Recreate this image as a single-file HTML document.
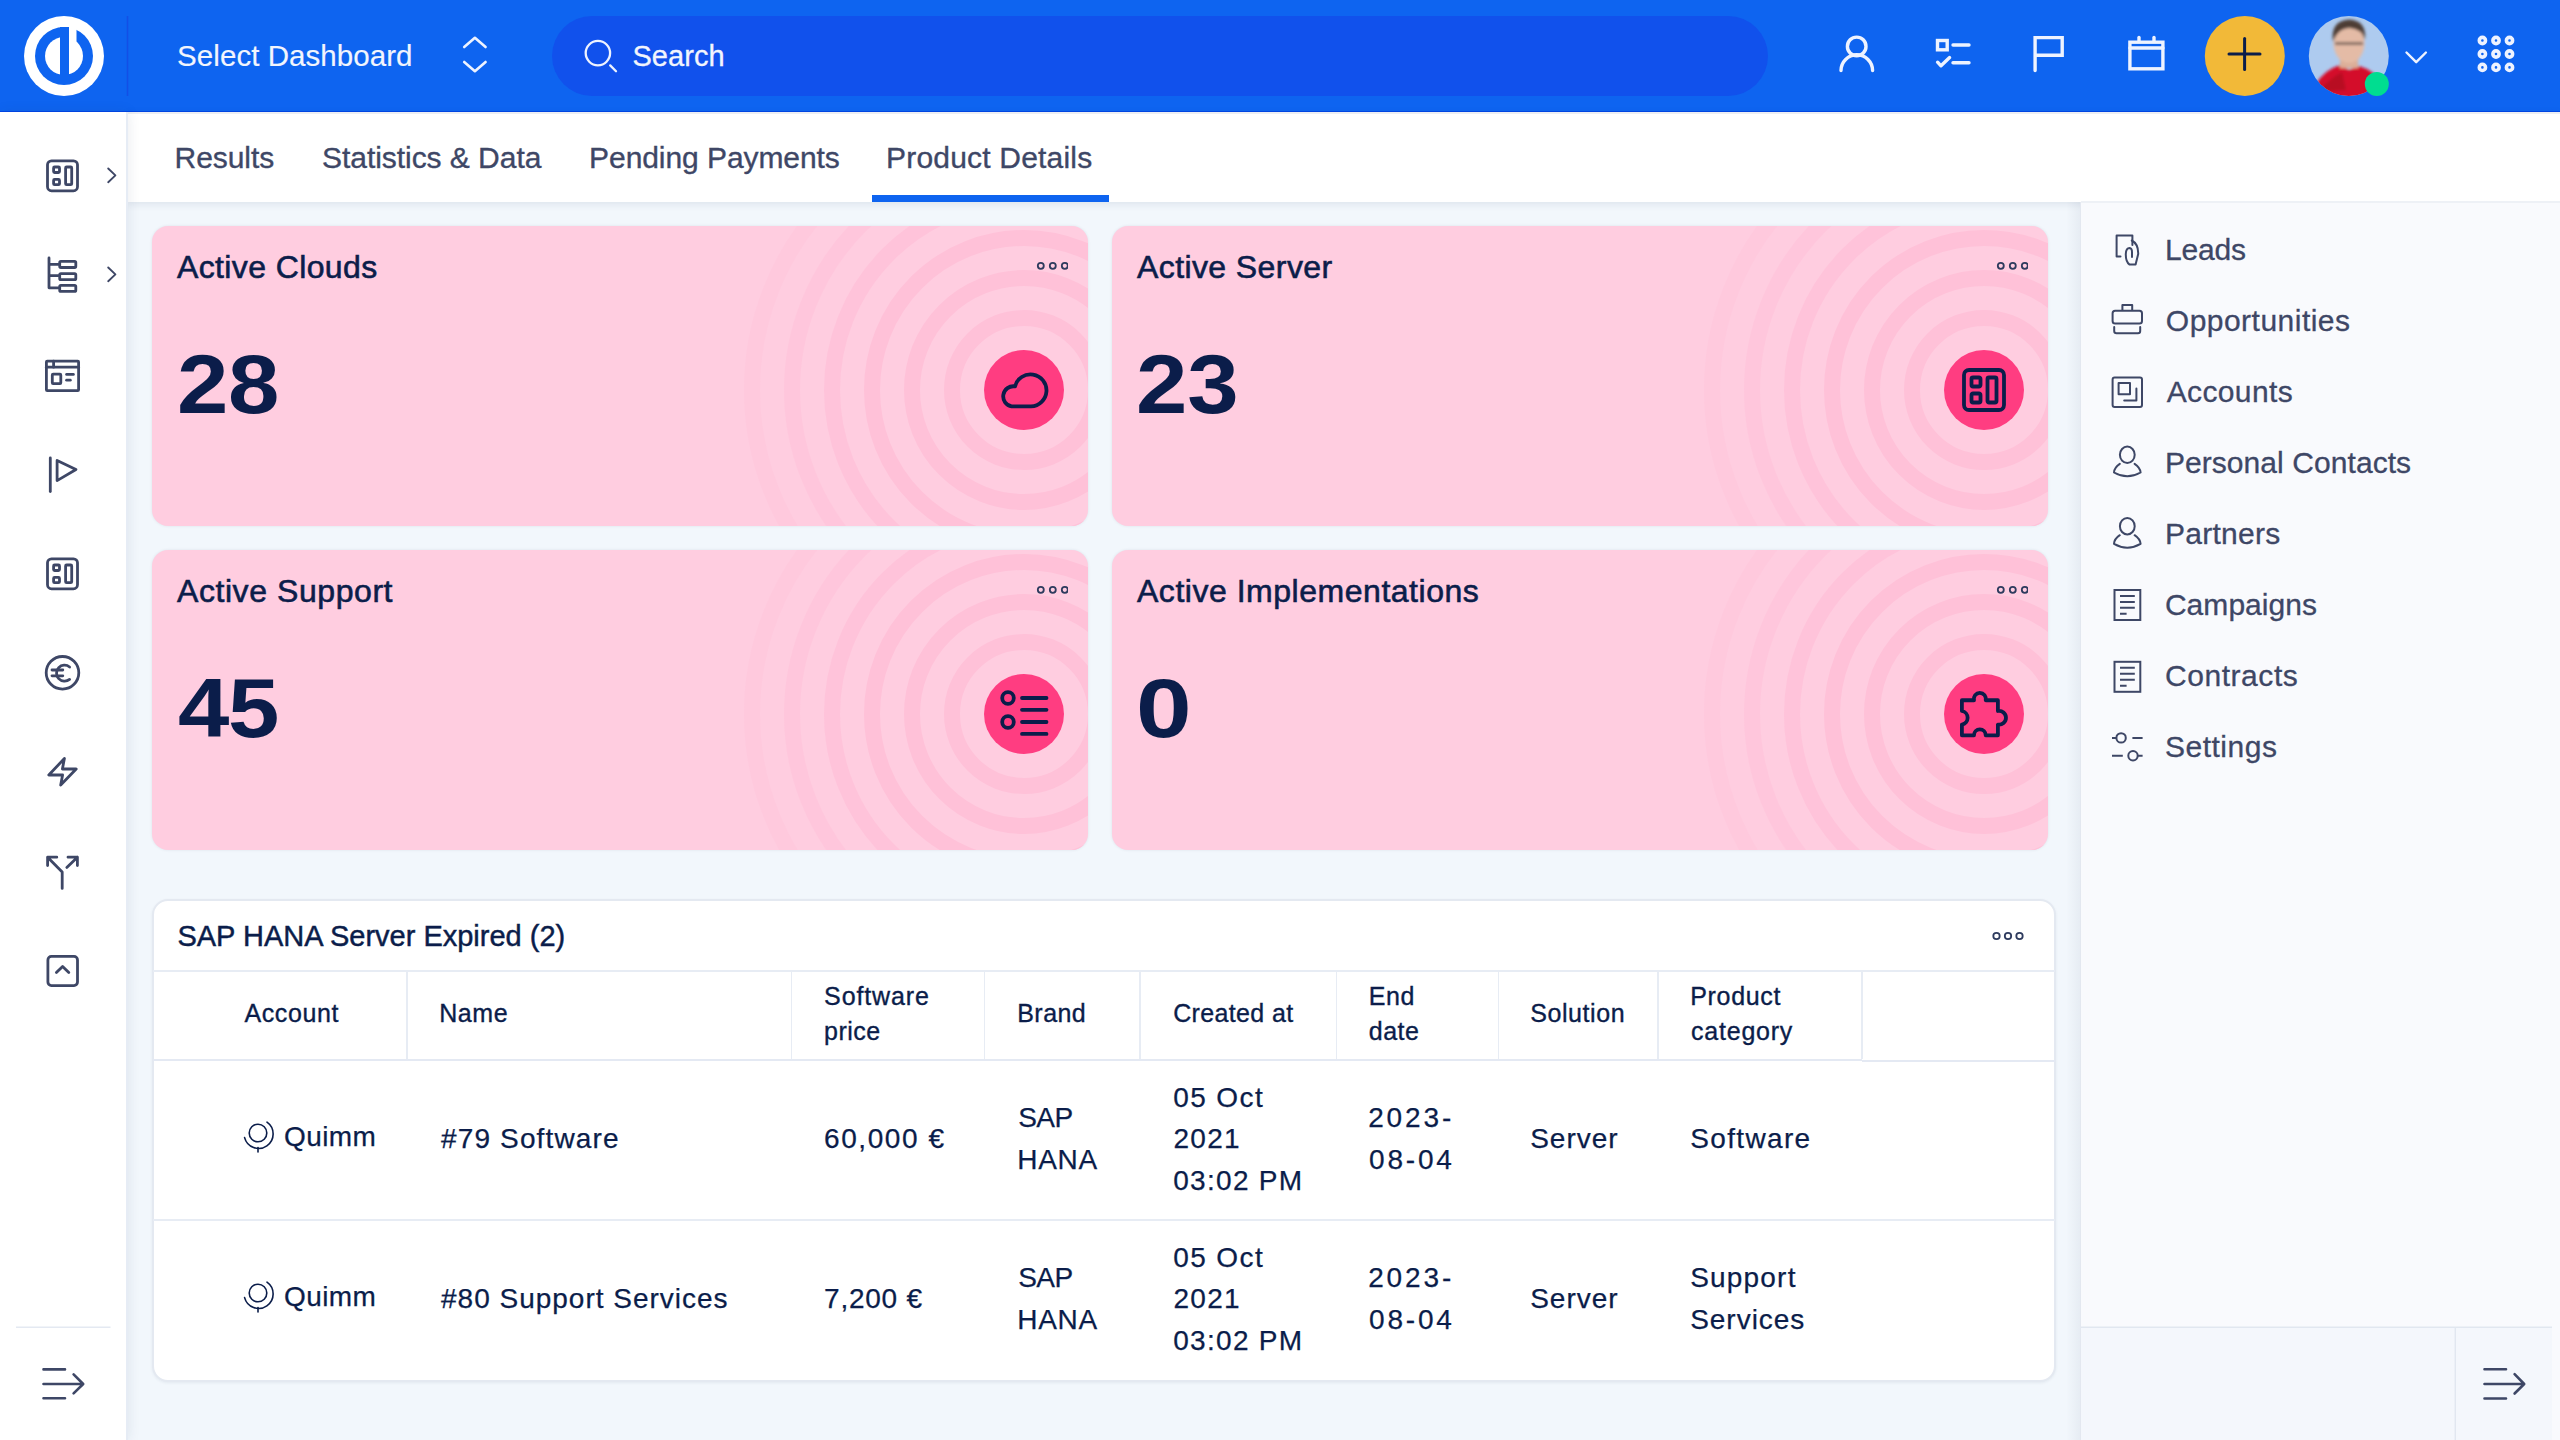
<!DOCTYPE html>
<html><head><meta charset="utf-8">
<style>
*{box-sizing:border-box;margin:0;padding:0}
html,body{width:2560px;height:1440px;overflow:hidden}
body{position:relative;background:#f2f7fc;font-family:"Liberation Sans",sans-serif;color:#0b1d4a}
.abs{position:absolute}
.t{position:absolute;white-space:nowrap;line-height:1}
#hdr{left:0;top:0;width:2560px;height:112px;background:#0e64f0}
#side{left:0;top:112px;width:127px;height:1328px;background:#fff;box-shadow:1px 0 12px rgba(30,50,90,.10);z-index:5}
#tabs{left:127px;top:112px;width:2433px;height:90px;background:#fff;box-shadow:0 2px 8px rgba(30,50,90,.10)}
#rp{left:2081px;top:202px;width:479px;height:1238px;background:#f9fafd}
#rpsh{left:2066px;top:202px;width:15px;height:1238px;background:linear-gradient(to right,rgba(30,50,90,0),rgba(30,50,90,.06))}
#rpf{left:2081px;top:1328px;width:471px;height:112px;background:#f4f7fc}
.card{position:absolute;width:936px;height:300px;border-radius:16px;background:#ffcde0;overflow:hidden;box-shadow:0 0 3px rgba(40,50,80,.10)}
</style></head><body>
<div id="hdr" class="abs">
  <svg class="abs" style="left:0;top:0" width="140" height="112" viewBox="0 0 140 112">
    <circle cx="64" cy="56" r="40" fill="#fff"/>
    <circle cx="64" cy="56" r="29" fill="#0e64f0"/>
    <circle cx="64" cy="56" r="19" fill="#fff"/>
    <path d="M68.9,25 H76.5 V42 L68.9,48 Z" fill="#fff"/>
    <rect x="60" y="27" width="9" height="48" fill="#0e64f0"/>
    <line x1="127.5" y1="16" x2="127.5" y2="96" stroke="#134fe6" stroke-width="1.5"/>
  </svg>
  <svg class="abs" style="left:455px;top:30px" width="40" height="50" viewBox="0 0 40 50">
    <g fill="none" stroke="#eef3ff" stroke-width="2.6" stroke-linecap="round" stroke-linejoin="round">
    <polyline points="9.2,17 19.9,7.8 30.6,17"/>
    <polyline points="9.2,32 19.9,41.2 30.6,32"/></g>
  </svg>
  <div class="abs" style="left:552px;top:16px;width:1216px;height:80px;border-radius:40px;background:#1151ec"></div>
  <svg class="abs" style="left:570px;top:26px" width="60" height="60" viewBox="570 26 60 60">
    <g fill="none" stroke="#eef3ff" stroke-width="2.3" stroke-linecap="round"><circle cx="597.9" cy="53.1" r="12.2"/><line x1="610.2" y1="65.4" x2="616" y2="71.2"/></g>
  </svg>
</div>
<div class="abs" style="left:0;top:110.6px;width:2560px;height:1.4px;background:#0046e6"></div>
<div id="t52" class="t" style="left:177.10px;top:41.03px;font-size:29.5px;color:#f2f5fd;-webkit-text-stroke:0.15px #f2f5fd;letter-spacing:0.060px">Select Dashboard</div><div id="t53" class="t" style="left:632.46px;top:41.95px;font-size:29px;color:#f2f5fd;-webkit-text-stroke:0.3px #f2f5fd;letter-spacing:0.072px">Search</div>
<svg class="abs" style="left:1800px;top:0" width="760" height="112" viewBox="1800 0 760 112">
<g fill="none" stroke="#eef3ff" stroke-width="3.4" stroke-linecap="round" stroke-linejoin="round">
<circle cx="1856.7" cy="46.4" r="9.3"/><path d="M1841,70.6 A15.8,15.8 0 0 1 1872.6,70.6"/>
<rect x="1937.5" y="40.5" width="9.7" height="9.3" stroke-linejoin="miter" stroke-linecap="butt"/><line x1="1953" y1="45" x2="1969" y2="45"/><line x1="1953" y1="62.8" x2="1969" y2="62.8"/><polyline points="1937.6,62.2 1941,65.8 1949.6,57.6"/>
<path d="M2035.1,70.5 V37.6 H2062.2 V55.3 H2035.1" stroke-linejoin="miter"/>
<rect x="2129.9" y="42.2" width="33" height="26.6" stroke-linejoin="miter"/><line x1="2129.9" y1="48" x2="2162.9" y2="48"/><line x1="2139" y1="37.5" x2="2139" y2="41"/><line x1="2154" y1="37.5" x2="2154" y2="41"/>
<polyline points="2406.5,52.5 2416.2,62.2 2425.9,52.5" stroke-width="2.4"/>
</g>
<circle cx="2244.8" cy="55.9" r="40" fill="#f2b938"/>
<g stroke="#0b1d4a" stroke-width="3" stroke-linecap="round"><line x1="2229" y1="54" x2="2260" y2="54"/><line x1="2244.6" y1="38.6" x2="2244.6" y2="69.6"/></g>
<defs><clipPath id="avc"><circle cx="2348.8" cy="56" r="40"/></clipPath><filter id="bl" x="-20%" y="-20%" width="140%" height="140%"><feGaussianBlur stdDeviation="1.6"/></filter></defs>
<g clip-path="url(#avc)"><rect x="2300" y="10" width="100" height="100" fill="#aecbef"/>
<g filter="url(#bl)">
<path d="M2308,100 L2316,84 Q2324,70 2340,65 L2349,70 L2359,66 Q2373,70 2382,82 L2396,100 Z" fill="#d40f2b"/>
<path d="M2318,92 Q2330,78 2342,72 L2346,90 Z" fill="#a00a1e" opacity=".55"/>
<rect x="2340" y="52" width="18" height="16" fill="#dcae98"/>
<ellipse cx="2349" cy="43" rx="15.5" ry="20" fill="#e4bba6"/>
<path d="M2333,42 Q2330,21 2349,19.5 Q2367,20.5 2365,40 Q2362,29 2350,28 Q2338,28 2333,42 Z" fill="#4e3c34"/>
<path d="M2335,43.5 H2363" stroke="#5a4844" stroke-width="2.2" fill="none"/>
</g></g>
<circle cx="2376.8" cy="83.9" r="12" fill="#00dd90"/>
<g fill="none" stroke="#eef3ff" stroke-width="3.6">
<circle cx="2482.4" cy="40.5" r="3.1"/><circle cx="2496" cy="40.5" r="3.1"/><circle cx="2509.5" cy="40.5" r="3.1"/>
<circle cx="2482.4" cy="54" r="3.1"/><circle cx="2496" cy="54" r="3.1"/><circle cx="2509.5" cy="54" r="3.1"/>
<circle cx="2482.4" cy="67.4" r="3.1"/><circle cx="2496" cy="67.4" r="3.1"/><circle cx="2509.5" cy="67.4" r="3.1"/>
</g>
</svg>
<div id="side" class="abs"></div><div class="abs" style="left:126.2px;top:112px;width:1.4px;height:1328px;background:#e6ecf5;z-index:6"></div>
<svg class="abs" style="left:0;top:112px;z-index:6" width="127" height="1328" viewBox="0 112 127 1328">
<g fill="none" stroke="#3e4766" stroke-width="2.8" stroke-linecap="round" stroke-linejoin="round">
<rect x="47.5" y="160.8" width="30" height="30" rx="4"/>
<rect x="53.6" y="167" width="5.9" height="5.5" rx="1"/><rect x="53.6" y="179.4" width="5.9" height="5.3" rx="1"/><rect x="65.6" y="167" width="6.1" height="17.7" rx="1"/>
<polyline points="108.2,168.5 115.4,175.4 108.2,182.2" stroke-width="1.9"/>
<path d="M49,258 V287.8 H58.3 M49,264.4 H58.3 M49,275.6 H58.3" />
<rect x="59.7" y="261.4" width="16.1" height="6.1" rx="1.2"/><rect x="59.7" y="273.6" width="16.1" height="6" rx="1.2"/><rect x="59.7" y="285.3" width="16.1" height="6.1" rx="1.2"/>
<polyline points="108.2,267.5 115.4,274.4 108.2,281.2" stroke-width="1.9"/>
<rect x="46.4" y="361.2" width="32.2" height="29.4" rx="0.8"/><line x1="46.4" y1="367.2" x2="78.6" y2="367.2"/><line x1="53.6" y1="361.2" x2="53.6" y2="367.2"/>
<rect x="52.3" y="374.2" width="8.5" height="9.4" rx="0.8"/><line x1="66.6" y1="374.4" x2="73.4" y2="374.4"/><line x1="66.6" y1="380.2" x2="70.3" y2="380.2"/>
<line x1="50.3" y1="458" x2="50.3" y2="491.5"/><path d="M57.1,460.5 L76,469.5 L57.1,480.6 Z"/>
<rect x="47.5" y="558.8" width="30" height="30" rx="4"/>
<rect x="53.6" y="565" width="5.9" height="5.5" rx="1"/><rect x="53.6" y="577.4" width="5.9" height="5.3" rx="1"/><rect x="65.6" y="565" width="6.1" height="17.7" rx="1"/>
<circle cx="62.5" cy="672.8" r="16.3"/><path d="M69.6,667 A8,8 0 1 0 69.6,679.4"/><line x1="52" y1="670" x2="62.8" y2="670"/><line x1="52" y1="675.8" x2="62.8" y2="675.8"/>
<path d="M64.4,758.5 L48.8,775 H62.6 L60.7,785 L76.2,769 H62.4 Z"/>
<path d="M62.2,888.4 V872 L47.6,857.2 M47.6,857.2 H56.8 M47.6,857.2 V865.6 M66.8,867.4 L77.4,857.2 M68,857.2 H77.4 V865.6"/>
<rect x="47.9" y="956.4" width="29.6" height="29.2" rx="3.5"/><polyline points="56.4,972.6 62.6,966.4 68.8,972.6"/>
<path d="M43.5,1369.4 H65 M43.5,1384 H83 M43.5,1398.3 H65 M73.6,1374.4 L83.2,1384 L73.6,1393.4" stroke-width="2.6"/>
</g>
<line x1="16" y1="1327.3" x2="110.5" y2="1327.3" stroke="#e4e9f2" stroke-width="1.6"/>
</svg>
<div id="tabs" class="abs"></div><div class="abs" style="left:127px;top:112px;width:2433px;height:1.5px;background:#eceef3"></div>
<div id="t54" class="t" style="left:174.56px;top:143.20px;font-size:30px;color:#3e4766;-webkit-text-stroke:0.35px #3e4766;letter-spacing:-0.060px">Results</div><div id="t55" class="t" style="left:322.00px;top:143.20px;font-size:30px;color:#3e4766;-webkit-text-stroke:0.35px #3e4766;letter-spacing:-0.045px">Statistics &amp; Data</div><div id="t56" class="t" style="left:589.10px;top:143.20px;font-size:30px;color:#3e4766;-webkit-text-stroke:0.35px #3e4766;letter-spacing:-0.072px">Pending Payments</div><div id="t57" class="t" style="left:886.10px;top:143.20px;font-size:30px;color:#3e4766;-webkit-text-stroke:0.35px #3e4766;letter-spacing:0.193px">Product Details</div>
<div class="abs" style="left:872px;top:195px;width:237px;height:7px;background:#0e64f0"></div>
<div id="rpsh" class="abs"></div><div id="rp" class="abs"></div><div class="abs" style="left:2079.8px;top:202px;width:1.4px;height:1238px;background:#e3e8f0"></div><div class="abs" style="left:2081px;top:201px;width:479px;height:1.5px;background:#eef1f6"></div>
<div id="rpf" class="abs"></div>
<svg class="abs" style="left:2081px;top:202px" width="479" height="1238" viewBox="2081 202 479 1238">
<g fill="none" stroke="#3e4766" stroke-width="2" stroke-linecap="round" stroke-linejoin="round">
<path d="M2120.5,256.5 H2116.6 V235.4 H2132.4 V245"/><path d="M2131.8,240.5 Q2138.5,244 2138.2,254 L2135.6,264.6 H2129.6 Q2125.6,262 2125.8,254 Q2126,248 2129.6,248 Q2132.2,248.2 2132,253 V257"/>
<path d="M2122.4,310 V305 H2132.2 V310"/><rect x="2112.6" y="310.8" width="29.4" height="12.6" rx="2.5"/><path d="M2114.2,327 V331 Q2114.2,333.2 2116.5,333.2 H2138 Q2140.2,333.2 2140.2,331 V327"/>
<rect x="2112.6" y="377.5" width="29.4" height="29.4" rx="2"/><rect x="2118.6" y="383" width="11.4" height="11.2"/><path d="M2136.4,388.5 V400.6 H2124.2"/>
<ellipse cx="2127.3" cy="454.8" rx="7.4" ry="8.2"/><path d="M2119.8,463.8 Q2114.2,467.6 2114,472.5 Q2127.3,480 2140.6,472.5 Q2140.2,467.6 2134.6,463.8"/>
<ellipse cx="2127.3" cy="526.2" rx="7.4" ry="8.2"/><path d="M2119.8,535.2 Q2114.2,539 2114,543.9 Q2127.3,551.4 2140.6,543.9 Q2140.2,539 2134.6,535.2"/>
<rect x="2114.5" y="590" width="25.8" height="30" stroke-linejoin="miter"/><path d="M2120,596 H2134.8 M2120,602 H2134.8 M2120,607.8 H2134.8 M2120,613.7 H2126.6" stroke-linecap="butt"/>
<rect x="2114.5" y="661.8" width="25.8" height="30" stroke-linejoin="miter"/><path d="M2120,667.8 H2134.8 M2120,673.7 H2134.8 M2120,679.7 H2134.8 M2120,685.7 H2126.6" stroke-linecap="butt"/>
<circle cx="2121.1" cy="737.9" r="4.7"/><path d="M2112,737.9 H2116.4 M2132.4,737.9 H2142.6 M2112,755.7 H2122.8 M2137.8,755.7 H2142.6" stroke-linecap="butt"/><circle cx="2133" cy="755.7" r="4.7"/>
</g>
<line x1="2081" y1="1327.3" x2="2552" y2="1327.3" stroke="#e1e7f0" stroke-width="1.6"/>
<line x1="2455.3" y1="1328" x2="2455.3" y2="1440" stroke="#e1e7f0" stroke-width="1.4"/>
<path d="M2484.5,1369.2 H2506 M2484.5,1384 H2524 M2484.5,1398.5 H2506 M2514.6,1374.2 L2524.2,1384 L2514.6,1393.5" fill="none" stroke="#3e4766" stroke-width="2.6" stroke-linecap="round" stroke-linejoin="round"/>
</svg>
<div id="t8" class="t" style="left:2164.92px;top:234.80px;font-size:30px;color:#3e4766;-webkit-text-stroke:0.3px #3e4766;letter-spacing:-0.180px">Leads</div>
<div id="t9" class="t" style="left:2165.82px;top:305.61px;font-size:30px;color:#3e4766;-webkit-text-stroke:0.3px #3e4766;letter-spacing:0.480px">Opportunities</div>
<div id="t10" class="t" style="left:2166.72px;top:376.61px;font-size:30px;color:#3e4766;-webkit-text-stroke:0.3px #3e4766;letter-spacing:0.360px">Accounts</div>
<div id="t11" class="t" style="left:2164.92px;top:447.61px;font-size:30px;color:#3e4766;-webkit-text-stroke:0.3px #3e4766;letter-spacing:0.068px">Personal Contacts</div>
<div id="t12" class="t" style="left:2164.92px;top:519.21px;font-size:30px;color:#3e4766;-webkit-text-stroke:0.3px #3e4766;letter-spacing:0.283px">Partners</div>
<div id="t13" class="t" style="left:2164.92px;top:589.50px;font-size:30px;color:#3e4766;-webkit-text-stroke:0.3px #3e4766;letter-spacing:0.045px">Campaigns</div>
<div id="t14" class="t" style="left:2164.92px;top:661.21px;font-size:30px;color:#3e4766;-webkit-text-stroke:0.3px #3e4766;letter-spacing:0.562px">Contracts</div>
<div id="t15" class="t" style="left:2164.92px;top:731.90px;font-size:30px;color:#3e4766;-webkit-text-stroke:0.3px #3e4766;letter-spacing:0.515px">Settings</div>

<div class="card" style="left:152px;top:226px"><svg class="abs" style="left:0;top:0" width="936" height="300" viewBox="0 0 936 300"><g fill="none" stroke="#ffc1d8" stroke-width="16"><circle cx="872" cy="164" r="72" stroke-opacity="1.0"/><circle cx="872" cy="164" r="112" stroke-opacity="1.0"/><circle cx="872" cy="164" r="152" stroke-opacity="1.0"/><circle cx="872" cy="164" r="192" stroke-opacity="0.8"/><circle cx="872" cy="164" r="232" stroke-opacity="0.55"/><circle cx="872" cy="164" r="272" stroke-opacity="0.3"/></g></svg>
<svg class="abs" style="left:832px;top:124px" width="80" height="80" viewBox="-40 -40 80 80"><circle r="40" fill="#ff3d81"/><g fill="none" stroke="#0b1d4a" stroke-width="3.8" stroke-linecap="round" stroke-linejoin="round"><path d="M-12.3,16.4 A10,10 0 0 1 -9,-3.6 A16,16 0 1 1 7,16.4 Z"/></g></svg>
<svg class="abs" style="left:880px;top:32px" width="36" height="16" viewBox="0 0 36 16"><g fill="none" stroke="#2e3b5e" stroke-width="1.8"><circle cx="8.8" cy="7.8" r="3"/><circle cx="20.8" cy="7.8" r="3"/><circle cx="32.8" cy="7.8" r="3"/></g></svg>
</div>
<div id="t0" class="t" style="left:177.00px;top:251.41px;font-size:32px;color:#0b1d4a;-webkit-text-stroke:0.6px #0b1d4a;letter-spacing:0.375px">Active Clouds</div>
<div id="t1" class="t" style="left:176.82px;top:342.00px;font-size:84px;color:#0b1d4a;font-weight:700;letter-spacing:-0.360px;transform:scaleX(1.1);transform-origin:0 0">28</div><div class="card" style="left:1112px;top:226px"><svg class="abs" style="left:0;top:0" width="936" height="300" viewBox="0 0 936 300"><g fill="none" stroke="#ffc1d8" stroke-width="16"><circle cx="872" cy="164" r="72" stroke-opacity="1.0"/><circle cx="872" cy="164" r="112" stroke-opacity="1.0"/><circle cx="872" cy="164" r="152" stroke-opacity="1.0"/><circle cx="872" cy="164" r="192" stroke-opacity="0.8"/><circle cx="872" cy="164" r="232" stroke-opacity="0.55"/><circle cx="872" cy="164" r="272" stroke-opacity="0.3"/></g></svg>
<svg class="abs" style="left:832px;top:124px" width="80" height="80" viewBox="-40 -40 80 80"><circle r="40" fill="#ff3d81"/><g fill="none" stroke="#0b1d4a" stroke-width="3.8" stroke-linecap="round" stroke-linejoin="round"><rect x="-20" y="-20" width="40" height="40" rx="5"/><rect x="-12.5" y="-12.5" width="9" height="9" rx="1.5"/><rect x="-12.5" y="3.5" width="9" height="9" rx="1.5"/><rect x="3.5" y="-12.5" width="9" height="25" rx="1.5"/></g></svg>
<svg class="abs" style="left:880px;top:32px" width="36" height="16" viewBox="0 0 36 16"><g fill="none" stroke="#2e3b5e" stroke-width="1.8"><circle cx="8.8" cy="7.8" r="3"/><circle cx="20.8" cy="7.8" r="3"/><circle cx="32.8" cy="7.8" r="3"/></g></svg>
</div>
<div id="t2" class="t" style="left:1137.00px;top:251.41px;font-size:32px;color:#0b1d4a;-webkit-text-stroke:0.6px #0b1d4a;letter-spacing:0.406px">Active Server</div>
<div id="t3" class="t" style="left:1136.46px;top:342.00px;font-size:84px;color:#0b1d4a;font-weight:700;letter-spacing:-0.180px;transform:scaleX(1.1);transform-origin:0 0">23</div><div class="card" style="left:152px;top:550px"><svg class="abs" style="left:0;top:0" width="936" height="300" viewBox="0 0 936 300"><g fill="none" stroke="#ffc1d8" stroke-width="16"><circle cx="872" cy="164" r="72" stroke-opacity="1.0"/><circle cx="872" cy="164" r="112" stroke-opacity="1.0"/><circle cx="872" cy="164" r="152" stroke-opacity="1.0"/><circle cx="872" cy="164" r="192" stroke-opacity="0.8"/><circle cx="872" cy="164" r="232" stroke-opacity="0.55"/><circle cx="872" cy="164" r="272" stroke-opacity="0.3"/></g></svg>
<svg class="abs" style="left:832px;top:124px" width="80" height="80" viewBox="-40 -40 80 80"><circle r="40" fill="#ff3d81"/><g fill="none" stroke="#0b1d4a" stroke-width="3.8" stroke-linecap="round" stroke-linejoin="round"><circle cx="-16" cy="-16" r="5.8"/><circle cx="-16" cy="8" r="5.8"/><line x1="-2" y1="-16" x2="22.5" y2="-16"/><line x1="-2" y1="-4.2" x2="22.5" y2="-4.2"/><line x1="-2" y1="8" x2="22.5" y2="8"/><line x1="-2" y1="19.9" x2="22.5" y2="19.9"/></g></svg>
<svg class="abs" style="left:880px;top:32px" width="36" height="16" viewBox="0 0 36 16"><g fill="none" stroke="#2e3b5e" stroke-width="1.8"><circle cx="8.8" cy="7.8" r="3"/><circle cx="20.8" cy="7.8" r="3"/><circle cx="32.8" cy="7.8" r="3"/></g></svg>
</div>
<div id="t4" class="t" style="left:177.00px;top:575.41px;font-size:32px;color:#0b1d4a;-webkit-text-stroke:0.6px #0b1d4a;letter-spacing:0.568px">Active Support</div>
<div id="t5" class="t" style="left:178.26px;top:666.00px;font-size:84px;color:#0b1d4a;font-weight:700;letter-spacing:-1.260px;transform:scaleX(1.1);transform-origin:0 0">45</div><div class="card" style="left:1112px;top:550px"><svg class="abs" style="left:0;top:0" width="936" height="300" viewBox="0 0 936 300"><g fill="none" stroke="#ffc1d8" stroke-width="16"><circle cx="872" cy="164" r="72" stroke-opacity="1.0"/><circle cx="872" cy="164" r="112" stroke-opacity="1.0"/><circle cx="872" cy="164" r="152" stroke-opacity="1.0"/><circle cx="872" cy="164" r="192" stroke-opacity="0.8"/><circle cx="872" cy="164" r="232" stroke-opacity="0.55"/><circle cx="872" cy="164" r="272" stroke-opacity="0.3"/></g></svg>
<svg class="abs" style="left:832px;top:124px" width="80" height="80" viewBox="-40 -40 80 80"><circle r="40" fill="#ff3d81"/><g fill="none" stroke="#0b1d4a" stroke-width="3.8" stroke-linecap="round" stroke-linejoin="round"><path d="M-22.1,-13.75 H-10 A6,6 0 1 1 1.7,-13.75 H13.9 V-3 A6.9,6.9 0 1 1 13.9,10.6 V21.3 H1.7 A5.85,5.85 0 0 0 -10,21.3 H-22.1 V10.6 A6.9,6.9 0 0 0 -22.1,-3 Z"/></g></svg>
<svg class="abs" style="left:880px;top:32px" width="36" height="16" viewBox="0 0 36 16"><g fill="none" stroke="#2e3b5e" stroke-width="1.8"><circle cx="8.8" cy="7.8" r="3"/><circle cx="20.8" cy="7.8" r="3"/><circle cx="32.8" cy="7.8" r="3"/></g></svg>
</div>
<div id="t6" class="t" style="left:1137.00px;top:575.41px;font-size:32px;color:#0b1d4a;-webkit-text-stroke:0.6px #0b1d4a;letter-spacing:0.523px">Active Implementations</div>
<div id="t7" class="t" style="left:1135.56px;top:666.00px;font-size:84px;color:#0b1d4a;font-weight:700;letter-spacing:6.840px;transform:scaleX(1.19);transform-origin:0 0">0</div>
<div class="abs" style="left:152px;top:899px;width:1904px;height:483px;background:#fff;border-radius:16px;border:2px solid #e4e9f1;box-shadow:0 1px 3px rgba(30,50,90,.07)"></div>
<div id="t58" class="t" style="left:177.46px;top:922.45px;font-size:29px;color:#0b1d4a;-webkit-text-stroke:0.45px #0b1d4a;letter-spacing:-0.007px">SAP HANA Server Expired (2)</div>
<svg class="abs" style="left:1985px;top:925px" width="46" height="22" viewBox="0 0 46 22"><g fill="none" stroke="#2e3b5e" stroke-width="1.8"><circle cx="11.5" cy="11" r="3.2"/><circle cx="23" cy="11" r="3.2"/><circle cx="34.5" cy="11" r="3.2"/></g></svg>
<div class="abs" style="left:406.2px;top:971px;width:1.6px;height:88px;background:#e7ecf4"></div><div class="abs" style="left:790.7px;top:971px;width:1.6px;height:88px;background:#e7ecf4"></div><div class="abs" style="left:983.7px;top:971px;width:1.6px;height:88px;background:#e7ecf4"></div><div class="abs" style="left:1139.2px;top:971px;width:1.6px;height:88px;background:#e7ecf4"></div><div class="abs" style="left:1335.7px;top:971px;width:1.6px;height:88px;background:#e7ecf4"></div><div class="abs" style="left:1497.7px;top:971px;width:1.6px;height:88px;background:#e7ecf4"></div><div class="abs" style="left:1657.2px;top:971px;width:1.6px;height:88px;background:#e7ecf4"></div><div class="abs" style="left:1861.2px;top:971px;width:1.6px;height:88px;background:#e7ecf4"></div><div class="abs" style="left:153px;top:970px;width:1902px;height:1.6px;background:#e7ecf4"></div><div class="abs" style="left:153px;top:1058.5px;width:1709px;height:2px;background:#e4e9f3"></div><div class="abs" style="left:1862px;top:1060px;width:193px;height:2px;background:#e4e9f3"></div><div class="abs" style="left:153px;top:1219px;width:1902px;height:1.8px;background:#e7ecf4"></div><div id="t16" class="t" style="left:244.48px;top:1000.84px;font-size:25px;color:#0b1d4a;-webkit-text-stroke:0.35px #0b1d4a;letter-spacing:0.600px">Account</div><div id="t17" class="t" style="left:439.20px;top:1000.84px;font-size:25px;color:#0b1d4a;-webkit-text-stroke:0.35px #0b1d4a;letter-spacing:0.600px">Name</div><div id="t18" class="t" style="left:824.10px;top:983.84px;font-size:25px;color:#0b1d4a;-webkit-text-stroke:0.35px #0b1d4a;letter-spacing:0.874px">Software</div><div id="t19" class="t" style="left:824.00px;top:1018.84px;font-size:25px;color:#0b1d4a;-webkit-text-stroke:0.35px #0b1d4a;letter-spacing:0.500px">price</div><div id="t20" class="t" style="left:1017.24px;top:1000.84px;font-size:25px;color:#0b1d4a;-webkit-text-stroke:0.35px #0b1d4a;letter-spacing:0.452px">Brand</div><div id="t21" class="t" style="left:1173.16px;top:1000.84px;font-size:25px;color:#0b1d4a;-webkit-text-stroke:0.35px #0b1d4a;letter-spacing:0.360px">Created at</div><div id="t22" class="t" style="left:1368.80px;top:983.84px;font-size:25px;color:#0b1d4a;-webkit-text-stroke:0.35px #0b1d4a;letter-spacing:0.500px">End</div><div id="t23" class="t" style="left:1368.80px;top:1018.84px;font-size:25px;color:#0b1d4a;-webkit-text-stroke:0.35px #0b1d4a;letter-spacing:0.500px">date</div><div id="t24" class="t" style="left:1530.16px;top:1000.84px;font-size:25px;color:#0b1d4a;-webkit-text-stroke:0.35px #0b1d4a;letter-spacing:0.591px">Solution</div><div id="t25" class="t" style="left:1690.16px;top:983.84px;font-size:25px;color:#0b1d4a;-webkit-text-stroke:0.35px #0b1d4a;letter-spacing:0.690px">Product</div><div id="t26" class="t" style="left:1691.06px;top:1018.84px;font-size:25px;color:#0b1d4a;-webkit-text-stroke:0.35px #0b1d4a;letter-spacing:0.772px">category</div><div id="t27" class="t" style="left:284.10px;top:1123.10px;font-size:28px;color:#0b1d4a;-webkit-text-stroke:0.25px #0b1d4a;letter-spacing:0.360px">Quimm</div><div id="t28" class="t" style="left:441.00px;top:1125.10px;font-size:28px;color:#0b1d4a;-webkit-text-stroke:0.25px #0b1d4a;letter-spacing:1.146px">#79 Software</div><div id="t29" class="t" style="left:824.10px;top:1125.10px;font-size:28px;color:#0b1d4a;-webkit-text-stroke:0.25px #0b1d4a;letter-spacing:1.568px">60,000 €</div><div id="t30" class="t" style="left:1018.14px;top:1104.30px;font-size:28px;color:#0b1d4a;-webkit-text-stroke:0.25px #0b1d4a;letter-spacing:-0.450px">SAP</div><div id="t31" class="t" style="left:1017.24px;top:1145.90px;font-size:28px;color:#0b1d4a;-webkit-text-stroke:0.25px #0b1d4a;letter-spacing:0.720px">HANA</div><div id="t32" class="t" style="left:1173.16px;top:1083.50px;font-size:28px;color:#0b1d4a;-webkit-text-stroke:0.25px #0b1d4a;letter-spacing:1.404px">05 Oct</div><div id="t33" class="t" style="left:1173.60px;top:1125.10px;font-size:28px;color:#0b1d4a;-webkit-text-stroke:0.25px #0b1d4a;letter-spacing:1.200px">2021</div><div id="t34" class="t" style="left:1173.16px;top:1166.70px;font-size:28px;color:#0b1d4a;-webkit-text-stroke:0.25px #0b1d4a;letter-spacing:1.311px">03:02 PM</div><div id="t35" class="t" style="left:1368.18px;top:1104.30px;font-size:28px;color:#0b1d4a;-webkit-text-stroke:0.25px #0b1d4a;letter-spacing:2.880px">2023-</div><div id="t36" class="t" style="left:1369.08px;top:1145.90px;font-size:28px;color:#0b1d4a;-webkit-text-stroke:0.25px #0b1d4a;letter-spacing:2.792px">08-04</div><div id="t37" class="t" style="left:1530.16px;top:1125.10px;font-size:28px;color:#0b1d4a;-webkit-text-stroke:0.25px #0b1d4a;letter-spacing:1.008px">Server</div><div id="t38" class="t" style="left:1690.16px;top:1125.10px;font-size:28px;color:#0b1d4a;-webkit-text-stroke:0.25px #0b1d4a;letter-spacing:1.363px">Software</div><svg class="abs" style="left:238px;top:1112.8px" width="40" height="40" viewBox="-20 -20 40 40"><g fill="none" stroke="#0b1d4a" stroke-width="1.6" stroke-linecap="round"><circle cx="0" cy="0" r="8.8"/><path d="M-13.4,4.6 A14.5,14.5 0 1 0 9,-10.9"/><line x1="0" y1="14.6" x2="0" y2="19"/></g></svg><div id="t39" class="t" style="left:284.10px;top:1283.10px;font-size:28px;color:#0b1d4a;-webkit-text-stroke:0.25px #0b1d4a;letter-spacing:0.360px">Quimm</div><div id="t40" class="t" style="left:441.00px;top:1285.10px;font-size:28px;color:#0b1d4a;-webkit-text-stroke:0.25px #0b1d4a;letter-spacing:0.995px">#80 Support Services</div><div id="t41" class="t" style="left:824.10px;top:1285.10px;font-size:28px;color:#0b1d4a;-webkit-text-stroke:0.25px #0b1d4a;letter-spacing:0.750px">7,200 €</div><div id="t42" class="t" style="left:1018.14px;top:1264.30px;font-size:28px;color:#0b1d4a;-webkit-text-stroke:0.25px #0b1d4a;letter-spacing:-0.450px">SAP</div><div id="t43" class="t" style="left:1017.24px;top:1305.90px;font-size:28px;color:#0b1d4a;-webkit-text-stroke:0.25px #0b1d4a;letter-spacing:0.720px">HANA</div><div id="t44" class="t" style="left:1173.16px;top:1243.50px;font-size:28px;color:#0b1d4a;-webkit-text-stroke:0.25px #0b1d4a;letter-spacing:1.404px">05 Oct</div><div id="t45" class="t" style="left:1173.60px;top:1285.10px;font-size:28px;color:#0b1d4a;-webkit-text-stroke:0.25px #0b1d4a;letter-spacing:1.200px">2021</div><div id="t46" class="t" style="left:1173.16px;top:1326.70px;font-size:28px;color:#0b1d4a;-webkit-text-stroke:0.25px #0b1d4a;letter-spacing:1.311px">03:02 PM</div><div id="t47" class="t" style="left:1368.18px;top:1264.30px;font-size:28px;color:#0b1d4a;-webkit-text-stroke:0.25px #0b1d4a;letter-spacing:2.880px">2023-</div><div id="t48" class="t" style="left:1369.08px;top:1305.90px;font-size:28px;color:#0b1d4a;-webkit-text-stroke:0.25px #0b1d4a;letter-spacing:2.792px">08-04</div><div id="t49" class="t" style="left:1530.16px;top:1285.10px;font-size:28px;color:#0b1d4a;-webkit-text-stroke:0.25px #0b1d4a;letter-spacing:1.008px">Server</div><div id="t50" class="t" style="left:1690.16px;top:1264.30px;font-size:28px;color:#0b1d4a;-webkit-text-stroke:0.25px #0b1d4a;letter-spacing:1.200px">Support</div><div id="t51" class="t" style="left:1690.16px;top:1305.90px;font-size:28px;color:#0b1d4a;-webkit-text-stroke:0.25px #0b1d4a;letter-spacing:0.977px">Services</div><svg class="abs" style="left:238px;top:1272.8px" width="40" height="40" viewBox="-20 -20 40 40"><g fill="none" stroke="#0b1d4a" stroke-width="1.6" stroke-linecap="round"><circle cx="0" cy="0" r="8.8"/><path d="M-13.4,4.6 A14.5,14.5 0 1 0 9,-10.9"/><line x1="0" y1="14.6" x2="0" y2="19"/></g></svg>
</body></html>
